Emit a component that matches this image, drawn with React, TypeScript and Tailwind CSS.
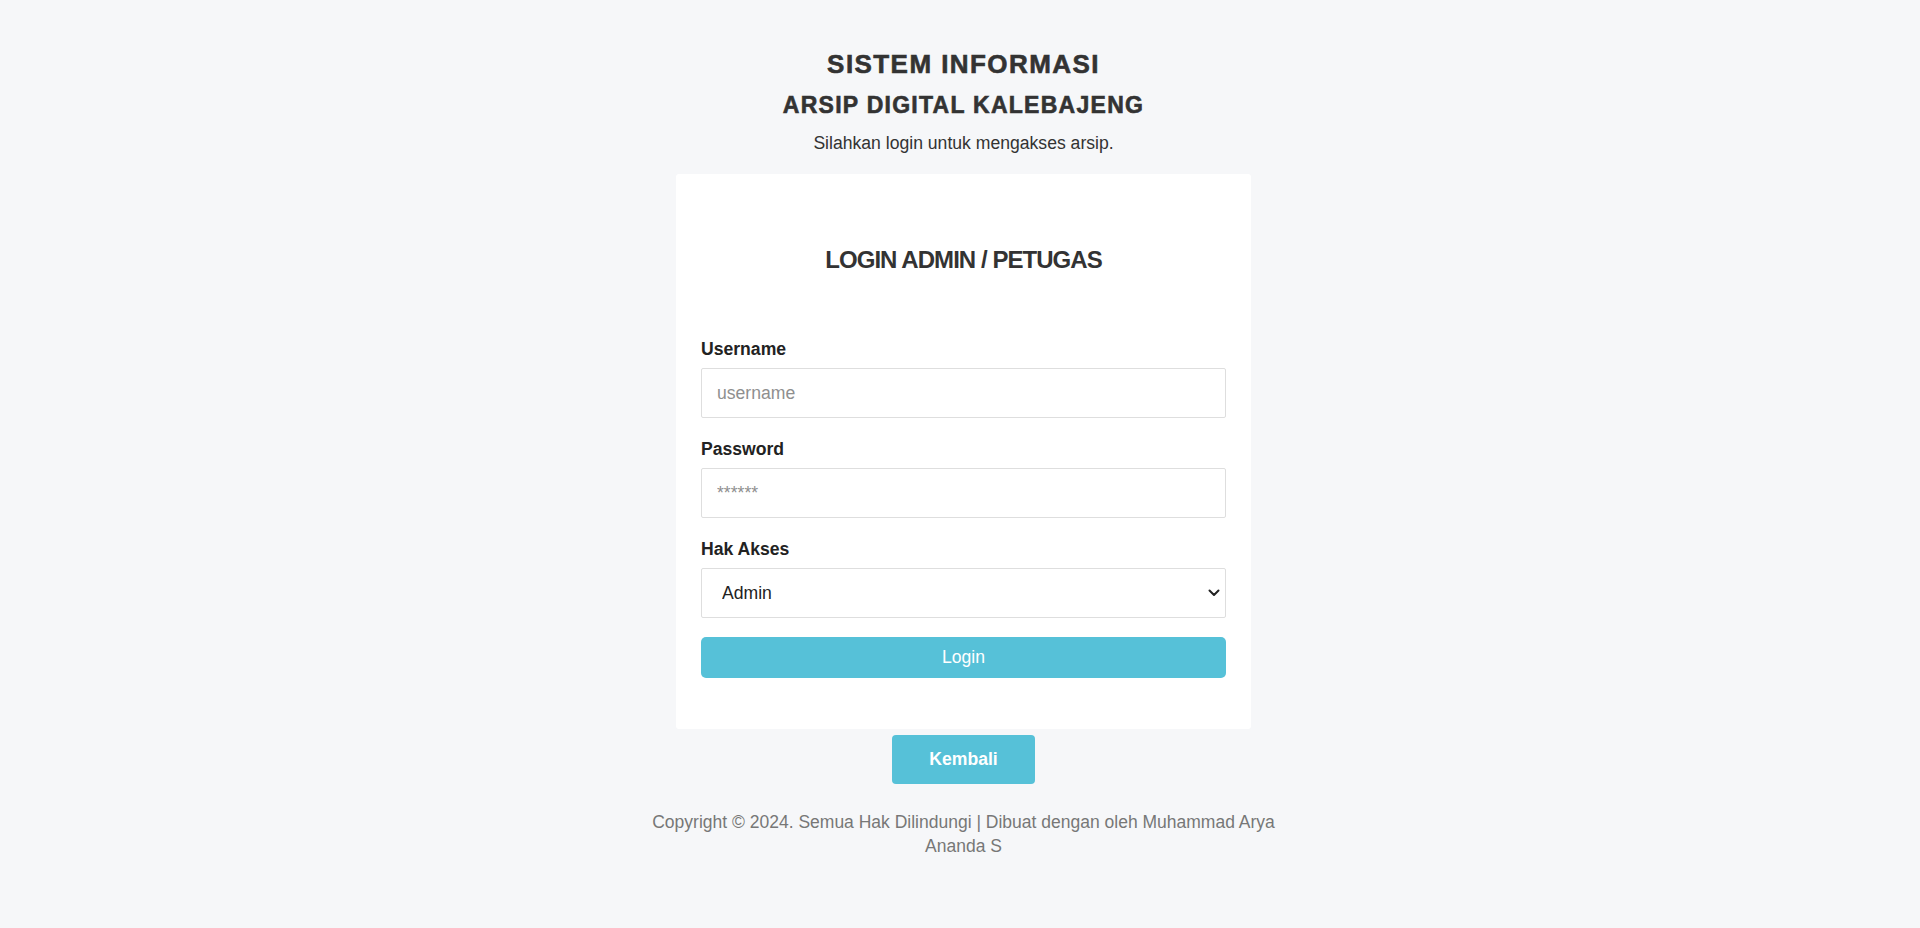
import React from "react";

const FONT = "font-['Liberation_Sans',Arial,sans-serif]";

function Field({ label, children }: { label: string; children: React.ReactNode }) {
  return (
    <div className="mb-[18px]">
      <label className="mb-[6px] block h-[26px] text-[17.6px] font-bold leading-[26px] text-[#222]">{label}</label>
      {children}
    </div>
  );
}

export default function App() {
  return (
    <div className={`min-h-[928px] w-full bg-[#f6f7f9] pl-[7px] text-[#333] ${FONT}`}>
      <div className="flex flex-col items-center pt-[49px]">
        <h1 className="text-[26px] font-bold leading-[31px] tracking-[0.055em] text-[#333] [-webkit-text-stroke:0.6px_#333]">
          SISTEM INFORMASI
        </h1>
        <h2 className="mt-[11px] text-[23px] font-bold leading-[28px] tracking-[0.055em] text-[#333] [-webkit-text-stroke:0.6px_#333]">
          ARSIP DIGITAL KALEBAJENG
        </h2>
        <p className="mt-[11px] text-[17.6px] leading-[26px] text-[#333]">Silahkan login untuk mengakses arsip.</p>

        <div className="mt-[18px] w-[575px] rounded-[3px] bg-white p-[25px]">
          <h3 className="mt-[46px] text-center text-[24px] font-bold leading-[29px] tracking-[-0.95px] text-[#333]">
            LOGIN ADMIN / PETUGAS
          </h3>
          <form className="mt-[62px] flex flex-col" onSubmit={(e) => e.preventDefault()}>
            <Field label="Username">
              <input
                type="text"
                placeholder="username"
                className="block h-[50px] w-full rounded-[2px] border border-[#dedede] bg-white px-[15px] text-[17.6px] text-[#333] outline-none placeholder:text-[#8f8f8f]"
              />
            </Field>
            <Field label="Password">
              <input
                type="password"
                placeholder="******"
                className="block h-[50px] w-full rounded-[2px] border border-[#dedede] bg-white px-[15px] text-[17.6px] text-[#333] outline-none placeholder:text-[#8f8f8f]"
              />
            </Field>
            <Field label="Hak Akses">
              <div className="relative">
                <select
                  defaultValue="admin"
                  className="block h-[50px] w-full appearance-none rounded-[2px] border border-[#dedede] bg-white pl-[20px] pr-[30px] text-[17.6px] text-[#222] outline-none"
                >
                  <option value="admin">Admin</option>
                  <option value="petugas">Petugas</option>
                </select>
                <svg
                  className="pointer-events-none absolute right-[6px] top-1/2 -translate-y-1/2"
                  width="12"
                  height="8"
                  viewBox="0 0 12 8"
                  fill="none"
                >
                  <path d="M1.5 1.5L6 6L10.5 1.5" stroke="#222" strokeWidth="2" strokeLinecap="round" strokeLinejoin="round" />
                </svg>
              </div>
            </Field>
            <button
              type="submit"
              className="mt-[1px] mb-[26px] block h-[41px] w-full rounded-[5px] bg-[#56c1d8] text-[17.6px] text-white"
            >
              Login
            </button>
          </form>
        </div>

        <button className="mt-[6px] h-[49px] w-[143px] rounded-[4px] bg-[#56c1d8] text-[17.6px] font-bold text-white">
          Kembali
        </button>

        <p className="mt-[26px] w-[650px] text-center text-[17.5px] leading-[24.4px] text-[#777]">
          Copyright © 2024. Semua Hak Dilindungi | Dibuat dengan oleh Muhammad Arya Ananda S
        </p>
      </div>
    </div>
  );
}
